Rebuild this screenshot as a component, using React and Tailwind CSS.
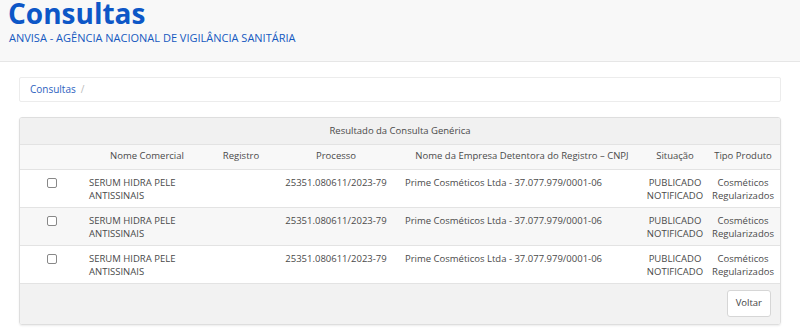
import React from "react";

const rows = [1, 2, 3];

export default function App() {
  return (
    <div className="w-[800px] h-[334px] overflow-hidden bg-white text-[#444]" style={{ fontFamily: '"Open Sans", "Noto Sans", sans-serif' }}>
      <div className="h-[63px] bg-[#f8f8f8] border-b border-[#e6e6e6] px-[8px]">
        <div className="text-[28px] leading-[28px] font-bold text-[#0d57c7] -mt-[1px]">Consultas</div>
        <div className="text-[11px] leading-[14px] text-[#1558c0] mt-[4px] pl-[1px]">ANVISA - AGÊNCIA NACIONAL DE VIGILÂNCIA SANITÁRIA</div>
      </div>
      <div className="px-[19px] pt-[15px]">
        <div className="h-[25px] border border-[#ececec] rounded-[2px] flex items-center px-[10px] text-[10px]">
          <span className="text-[#2d62c0]">Consultas</span>
          <span className="text-[#bbb] ml-[5px]">/</span>
        </div>
        <div className="mt-[15px] border border-[#dedede] rounded-[3px] shadow-[0_1px_2px_rgba(0,0,0,0.08)] overflow-hidden text-[9.5px] text-[#4a4a4a]">
          <table className="w-full border-collapse table-fixed">
            <colgroup>
              <col className="w-[64px]" />
              <col className="w-[126px]" />
              <col className="w-[62px]" />
              <col className="w-[128px]" />
              <col className="w-[244px]" />
              <col className="w-[62px]" />
              <col />
            </colgroup>
            <thead>
              <tr className="bg-[#f1f1f1] border-b border-[#e3e3e3]">
                <th colSpan={7} className="h-[26px] font-normal text-center">Resultado da Consulta Genérica</th>
              </tr>
              <tr className="bg-[#f8f8f8] border-b border-[#e3e3e3]">
                <th className="h-[25px]"></th>
                <th className="font-normal text-center">Nome Comercial</th>
                <th className="font-normal text-center">Registro</th>
                <th className="font-normal text-center">Processo</th>
                <th className="font-normal text-center">Nome da Empresa Detentora do Registro – CNPJ</th>
                <th className="font-normal text-center">Situação</th>
                <th className="font-normal text-center">Tipo Produto</th>
              </tr>
            </thead>
            <tbody>
              {rows.map((r, i) => (
                <tr key={r} className={(i % 2 === 1 ? "bg-[#f7f7f7] " : "bg-white ") + "border-b border-[#e3e3e3]"}>
                  <td className="h-[38px] align-top pt-[8px] text-center">
                    <span className="inline-block w-[10px] h-[10px] border border-[#888] rounded-[2px] bg-white"></span>
                  </td>
                  <td className="align-top pt-[6px] pl-[5px] leading-[13px]">SERUM HIDRA PELE ANTISSINAIS</td>
                  <td></td>
                  <td className="align-top pt-[6px] text-center leading-[13px]">25351.080611/2023-79</td>
                  <td className="align-top pt-[6px] pl-[5px] leading-[13px]">Prime Cosméticos Ltda - 37.077.979/0001-06</td>
                  <td className="align-top pt-[6px] text-center leading-[13px]">PUBLICADO NOTIFICADO</td>
                  <td className="align-top pt-[6px] text-center leading-[13px]">Cosméticos Regularizados</td>
                </tr>
              ))}
            </tbody>
          </table>
          <div className="bg-[#f2f2f2] h-[40px] flex items-center justify-end pr-[9px]">
            <button className="h-[27px] px-[8px] bg-white border border-[#d6d6d6] rounded-[3px] text-[9.5px] text-[#444]">Voltar</button>
          </div>
        </div>
      </div>
    </div>
  );
}
